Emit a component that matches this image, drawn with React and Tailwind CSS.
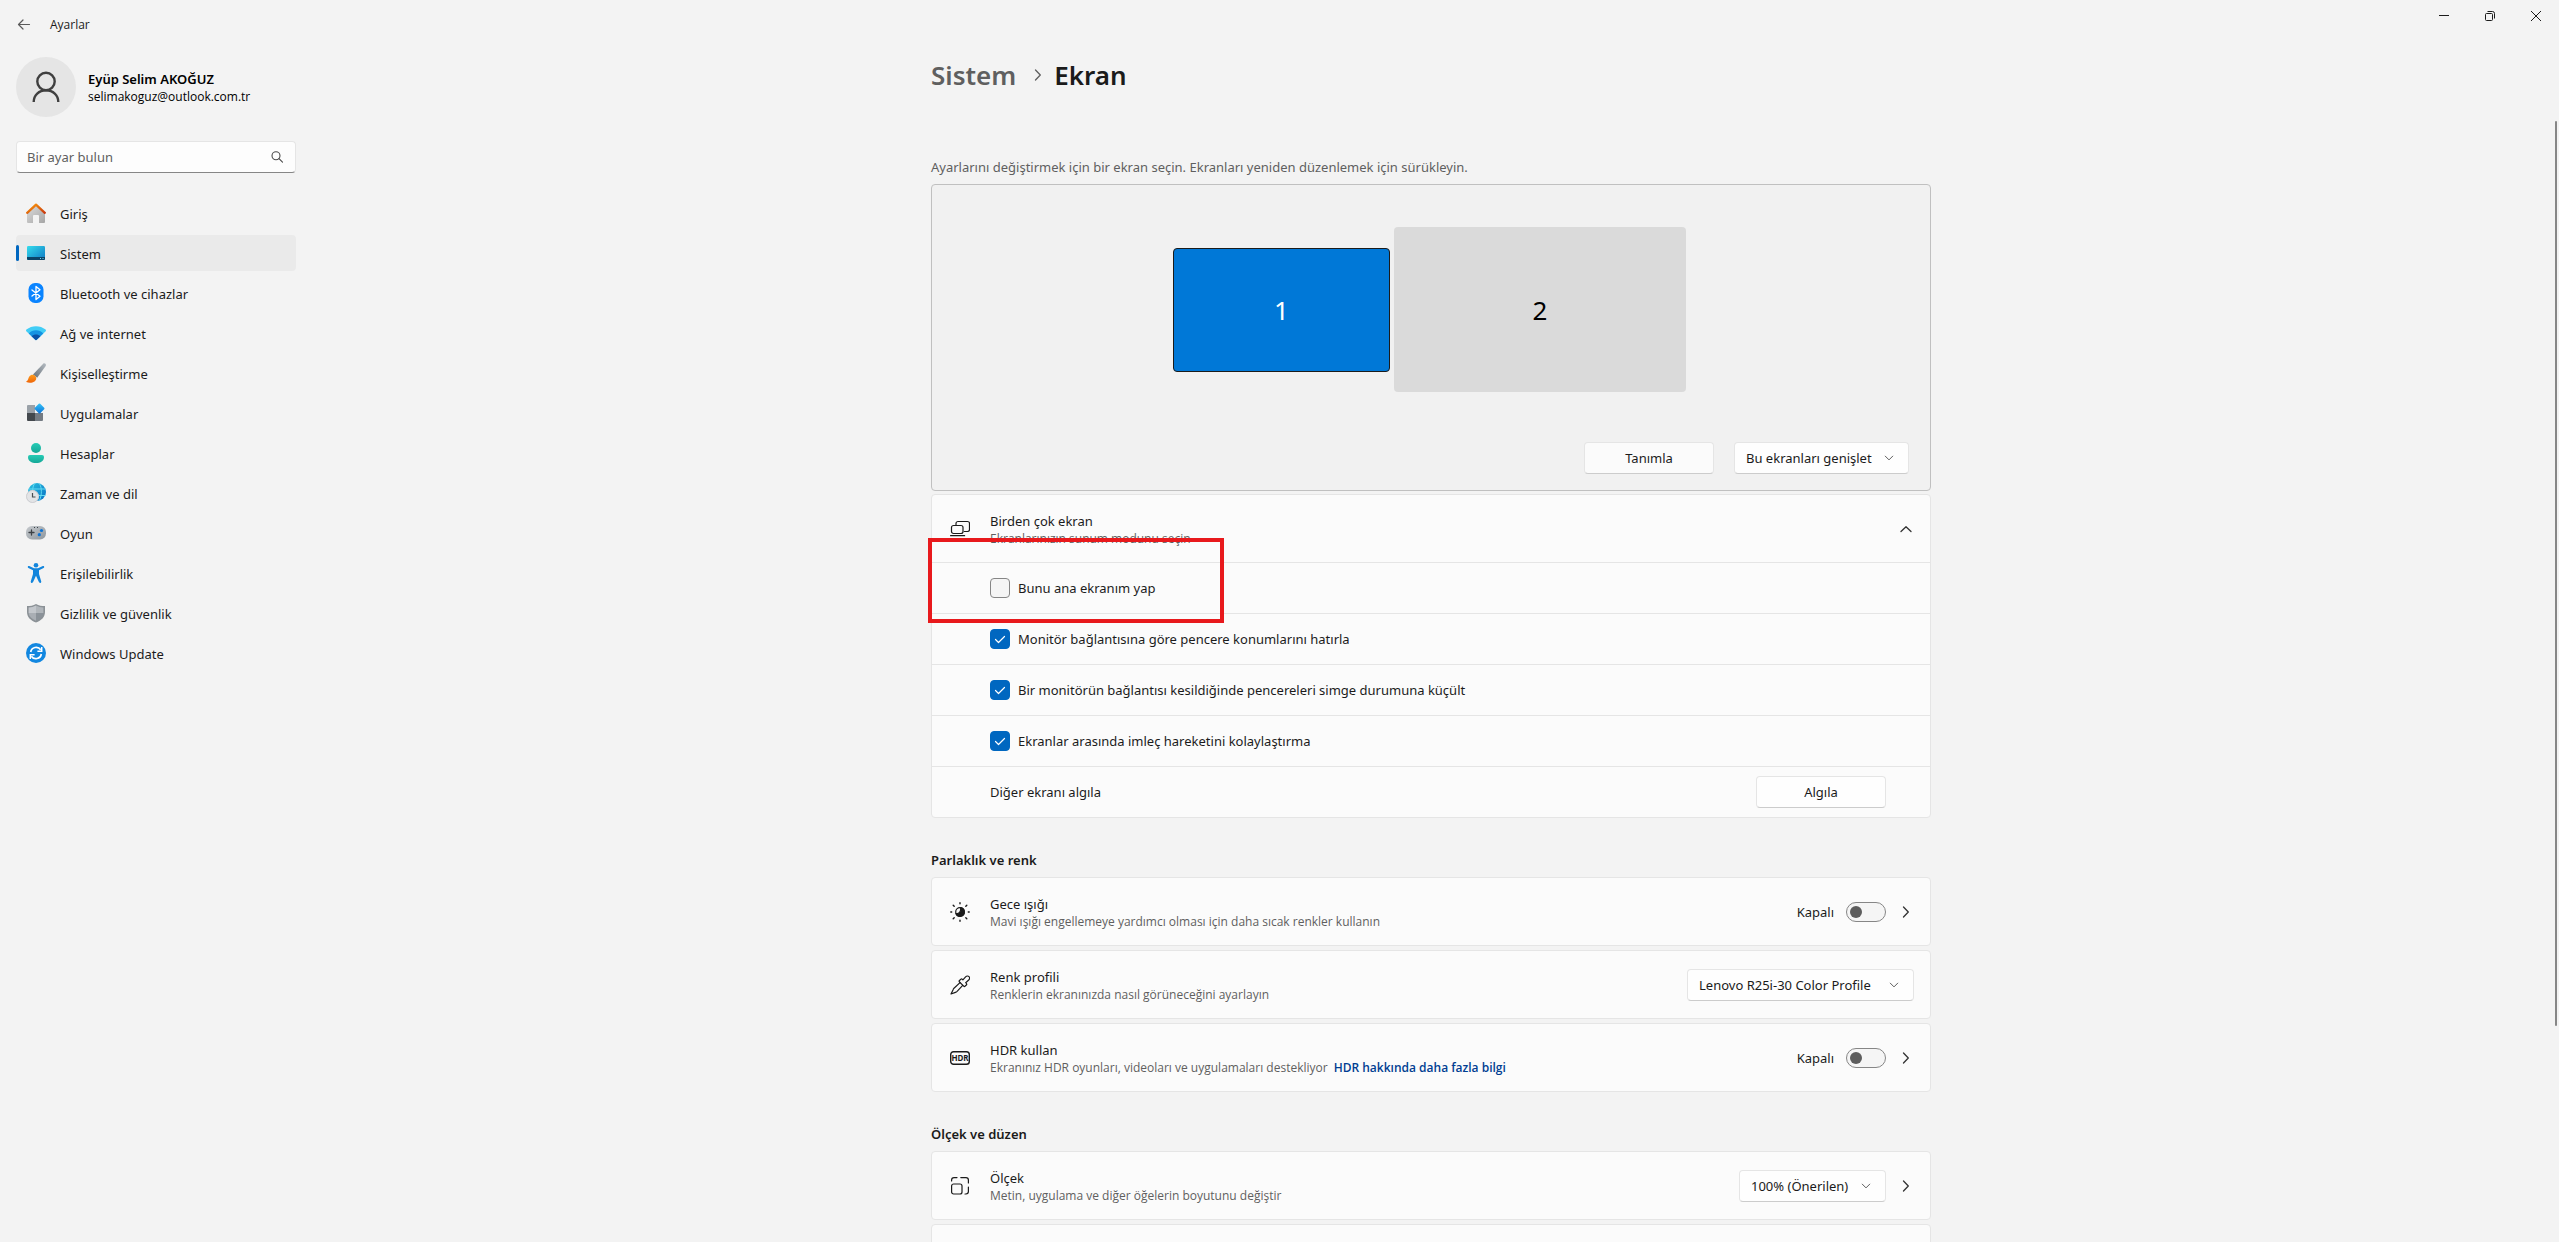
import { useState } from 'react'
import clsx from 'clsx'

/* ---------- Sidebar icons ---------- */

function HomeIcon() {
  return (
    <svg viewBox="0 0 20 20" className="size-5" aria-hidden="true">
      <defs>
        <linearGradient id="homeBody" x1="0" y1="0" x2="1" y2="1">
          <stop offset="0" stopColor="#dcdcdc" />
          <stop offset="1" stopColor="#a6a6a6" />
        </linearGradient>
        <linearGradient id="homeRoof" x1="0" y1="0" x2="1" y2="1">
          <stop offset="0" stopColor="#fb9a0a" />
          <stop offset="1" stopColor="#c93a10" />
        </linearGradient>
      </defs>
      <path d="M1 9.5 10 1.5l9 8V19a1 1 0 0 1-1 1h-5v-7a1 1 0 0 0-1-1H8a1 1 0 0 0-1 1v7H2a1 1 0 0 1-1-1z" fill="url(#homeBody)" />
      <path d="M1.2 9.8 10 1.7l8.8 8.1" fill="none" stroke="url(#homeRoof)" strokeWidth="2.3" strokeLinecap="round" strokeLinejoin="round" />
    </svg>
  )
}

function SystemIcon() {
  return (
    <svg viewBox="0 0 20 20" className="size-5" aria-hidden="true">
      <defs>
        <linearGradient id="sysScreen" x1="0" y1="0" x2="1" y2="1">
          <stop offset="0" stopColor="#35dcec" />
          <stop offset="1" stopColor="#0f78c4" />
        </linearGradient>
      </defs>
      <rect x="1" y="3" width="18" height="14" rx="1.2" fill="url(#sysScreen)" />
      <path d="M1 14h18v1.8a1.2 1.2 0 0 1-1.2 1.2H2.2A1.2 1.2 0 0 1 1 15.8z" fill="#0b4468" />
      <path d="M14 15h1v1h-1zM16.5 15h1v1h-1z" fill="#6fd6f2" />
    </svg>
  )
}

function BluetoothIcon() {
  return (
    <svg viewBox="0 0 20 20" className="size-5" aria-hidden="true">
      <rect x="2.5" width="15" height="20" rx="6.5" fill="#0a84ff" />
      <path d="m6 7 8 6.3-4 3.2V3.5l4 3.2L6 13" fill="none" stroke="#fff" strokeWidth="1.3" strokeLinejoin="round" strokeLinecap="round" />
    </svg>
  )
}

function NetworkIcon() {
  return (
    <svg viewBox="0 0 20 20" className="size-5" aria-hidden="true">
      <path d="M.3 8.2C-.1 7.8-.1 7 .4 6.6 5.8 2 14.2 2 19.600 6.600c.5.4.5 1.200.1 1.600l-9 8.600a1 1 0 0 1-1.400 0z" fill="#41cdf6" />
      <path d="M2.700 10.500c4-4.200 10.600-4.200 14.600 0l-6.600 6.300a1 1 0 0 1-1.400 0z" fill="#1593e2" />
      <path d="M5.600 13.300c2.400-2.500 6.400-2.500 8.800 0l-3.700 3.500a1 1 0 0 1-1.400 0z" fill="#0b52a6" />
    </svg>
  )
}

function BrushIcon() {
  return (
    <svg viewBox="0 0 20 20" className="size-5" aria-hidden="true">
      <defs>
        <linearGradient id="brushHandle" x1="1" y1="0" x2="0" y2="1">
          <stop offset="0" stopColor="#b4bbc1" />
          <stop offset="1" stopColor="#667079" />
        </linearGradient>
        <linearGradient id="brushTip" x1="0" y1="0" x2="0" y2="1">
          <stop offset="0" stopColor="#ff9d1e" />
          <stop offset="1" stopColor="#ee6407" />
        </linearGradient>
      </defs>
      <path d="M7 11.500 17.200.8c1.300-1.300 3.500.4 2.500 2.100L11.200 14.800z" fill="url(#brushHandle)" />
      <path d="M3.300 13.500c1.400-2.100 4.300-2.400 6-.6 1.500 1.700 1.200 4.300-.8 5.700-2.500 1.600-6 1.500-8.100.5-.3-.2-.3-.5 0-.6 2-.8 1.700-3.400 2.900-5z" fill="url(#brushTip)" />
    </svg>
  )
}

function AppsIcon() {
  return (
    <svg viewBox="0 0 20 20" className="size-5" aria-hidden="true">
      <defs>
        <linearGradient id="appsGem" x1="0" y1="0" x2="1" y2="1">
          <stop offset="0" stopColor="#36c5f8" />
          <stop offset="1" stopColor="#0a70d8" />
        </linearGradient>
      </defs>
      <path d="M2 2h7v8H1V3a1 1 0 0 1 1-1z" fill="#9aa1a8" />
      <path d="M1 10h8v8H2a1 1 0 0 1-1-1z" fill="#43484d" />
      <path d="M9 10h8v7a1 1 0 0 1-1 1H9z" fill="#747b83" />
      <rect x="9.700" y="1.700" width="7.600" height="7.600" rx="1" transform="rotate(45 13.500 5.500)" fill="url(#appsGem)" />
    </svg>
  )
}

function AccountsIcon() {
  return (
    <svg viewBox="0 0 20 20" className="size-5" aria-hidden="true">
      <defs>
        <linearGradient id="accFill" x1="0" y1="0" x2="0" y2="1">
          <stop offset="0" stopColor="#25cbb5" />
          <stop offset="1" stopColor="#15a797" />
        </linearGradient>
      </defs>
      <circle cx="10" cy="5" r="5" fill="url(#accFill)" />
      <path d="M4 12h12a2 2 0 0 1 2 2c0 4-3.500 6-8 6s-8-2-8-6a2 2 0 0 1 2-2z" fill="url(#accFill)" />
    </svg>
  )
}

function TimeIcon() {
  return (
    <svg viewBox="0 0 20 20" className="size-5" aria-hidden="true">
      <defs>
        <linearGradient id="timeGlobe" x1="0" y1="0" x2="1" y2="1">
          <stop offset="0" stopColor="#2bc3e0" />
          <stop offset="1" stopColor="#0870c4" />
        </linearGradient>
      </defs>
      <circle cx="11" cy="9" r="9" fill="url(#timeGlobe)" />
      <path d="M3 6h16.500M10 12.500h9.500M8.500.5C6.500 4 6.500 7 7 9M13.500.5c2.500 5 2.500 11 0 17" fill="none" stroke="#63dcf2" strokeWidth="1" />
      <circle cx="6.500" cy="13.500" r="6.500" fill="#e3e4e6" />
      <circle cx="6.500" cy="13.500" r="6" fill="none" stroke="#c6c8cb" strokeWidth=".8" />
      <path d="M6.500 10v4h3" fill="none" stroke="#4a4d50" strokeWidth="1.200" />
    </svg>
  )
}

function GamingIcon() {
  return (
    <svg viewBox="0 0 20 20" className="size-5" aria-hidden="true">
      <defs>
        <linearGradient id="padBody" x1="0" y1="0" x2="1" y2="1">
          <stop offset="0" stopColor="#c6cace" />
          <stop offset="1" stopColor="#8e969d" />
        </linearGradient>
      </defs>
      <rect y="3" width="20" height="13.500" rx="6" fill="url(#padBody)" />
      <path d="M5.500 7v5M3 9.500h5" stroke="#3c4146" strokeWidth="1.300" strokeLinecap="round" />
      <path d="M8 4h1v1H8zM11 4h1v1h-1z" fill="#3c4146" />
      <circle cx="15.500" cy="7.500" r="1.600" fill="#0c73d6" />
      <circle cx="13.300" cy="11.700" r="1.600" fill="#0c73d6" />
    </svg>
  )
}

function AccessibilityIcon() {
  return (
    <svg viewBox="0 0 20 20" className="size-5" aria-hidden="true">
      <circle cx="10" cy="2.300" r="2.300" fill="#1285dc" />
      <path d="M3.200 3.100 8 5.200h4l4.800-2.100c1.400-.5 2 1.400.8 2L13 7.300V11l2.200 7.300c.4 1.500-1.700 2.300-2.300.8L10 12.800l-2.900 6.300c-.6 1.500-2.700.7-2.300-.8L7 11V7.300L2.400 5.100c-1.200-.6-.6-2.500.8-2z" fill="#1285dc" />
    </svg>
  )
}

function PrivacyIcon() {
  return (
    <svg viewBox="0 0 20 20" className="size-5" aria-hidden="true">
      <path d="M10 1c2.800 1.700 5.700 2.100 9 2.100V9c0 5-3.500 8.500-9 10.500C4.500 17.500 1 14 1 9V3.100C4.300 3.100 7.200 2.700 10 1z" fill="#8b9196" />
      <path d="M10 2.600V10H2.600V4.500c2.700-.1 5.100-.6 7.400-1.900z" fill="#c3c7cc" />
      <path d="M10 2.600V10h7.400V4.500c-2.700-.1-5.100-.6-7.400-1.900z" fill="#b0b5ba" />
      <path d="M10 10v7.700C5.800 16 3 13.500 2.600 10z" fill="#a9aeb4" />
      <path d="M10 10v7.700c4.200-1.700 7-4.200 7.400-7.700z" fill="#8b9299" />
    </svg>
  )
}

function UpdateIcon() {
  return (
    <svg viewBox="0 0 20 20" className="size-5" aria-hidden="true">
      <circle cx="10" cy="10" r="10" fill="#1287e0" />
      <path d="M4.700 9a5.500 5.500 0 0 1 10-2.200M15.300 11a5.500 5.500 0 0 1-10 2.200" fill="none" stroke="#fff" strokeWidth="1.700" />
      <path d="M15.700 4v4.300h-4.300M4.300 16v-4.300h4.300" fill="none" stroke="#fff" strokeWidth="1.500" />
    </svg>
  )
}

/* ---------- Line icons ---------- */

function Chevron({ dir = 'right', className = 'size-4' }) {
  const d = {
    right: 'm5.500 3 4.800 5-4.800 5',
    up: 'M3 10.500 8 5.700l5 4.800',
    down: 'm3 5.500 5 5 5-5',
  }
  return (
    <svg viewBox="0 0 16 16" className={className} fill="none" stroke="currentColor" strokeWidth="1.300" strokeLinecap="round" strokeLinejoin="round" aria-hidden="true">
      <path d={d[dir]} />
    </svg>
  )
}

function LineIcon({ children }) {
  return (
    <svg viewBox="0 0 20 20" className="size-5 shrink-0 text-[#1b1b1b]" fill="none" stroke="currentColor" strokeWidth="1.200" strokeLinecap="round" strokeLinejoin="round" aria-hidden="true">
      {children}
    </svg>
  )
}

const icons = {
  displays: (
    <LineIcon>
      <path d="M6 6.200V4.500A2 2 0 0 1 8 2.500h9.500a2 2 0 0 1 2 2v6a2 2 0 0 1-2 2h-3.200" />
      <rect x="1.500" y="6.500" width="11.500" height="8" rx="2" />
      <path d="M.6 16.700h14" />
    </LineIcon>
  ),
  night: (
    <LineIcon>
      <circle cx="10" cy="10" r="4.300" />
      <path d="M10.500 5.700A4.300 4.300 0 1 1 6 11.500c3 .8 5.500-2.600 4.500-5.800z" fill="currentColor" />
      <path d="M10 .8v.9M10 18.300v.9M.8 10h.9M18.300 10h.9M3.200 3.200l1 1M15.800 15.800l1 1M16.800 3.200l-1 1M4.200 15.800l-1 1" strokeWidth="1.400" />
    </LineIcon>
  ),
  dropper: (
    <LineIcon>
      <path d="m9.500 5.500 1.200-1.200c.5-.5 1.200-.5 1.700 0l.5.500 2.700-3c1-1 2.600-1.100 3.400-.2.900.9.700 2.400-.3 3.400l-3 2.700.600.600c.5.500.5 1.200 0 1.700l-1.300 1.200c-.4.400-.9.400-1.300 0L9.500 7c-.4-.4-.4-1.100 0-1.500z" />
      <path d="m10 7.600-6 5.600c-.5.500-.8 1-1 1.700L1 19l4.400-1.600c.6-.2 1.200-.6 1.700-1.100l5.600-5.900" />
    </LineIcon>
  ),
  hdr: (
    <LineIcon>
      <rect x=".7" y="3.700" width="18.600" height="12.600" rx="2.800" strokeWidth="1.400" />
      <text x="10" y="12.900" textAnchor="middle" fontSize="8" fontWeight="700" fill="currentColor" stroke="none">HDR</text>
    </LineIcon>
  ),
  scale: (
    <LineIcon>
      <rect x="1.600" y="8" width="10.400" height="10" rx="2" />
      <path d="M1.600 5V4a2.400 2.400 0 0 1 2.400-2.400h3M10.800 1.600H16A2.400 2.400 0 0 1 18.400 4v3M18.400 11v4.600a2.400 2.400 0 0 1-2.400 2.400h-1" />
    </LineIcon>
  ),
}

/* ---------- Controls ---------- */

const controlBox = 'h-8 rounded-[4px] border border-[#e5e5e5] border-b-[#cccccc] text-[13px] text-[#1b1b1b]'
const smallText = "font-['Open_Sans',sans-serif] text-[12px] leading-4"

function Dropdown({ label, value, className }) {
  return (
    <div className={clsx('grid items-center', className)}>
      <select aria-label={label} className={clsx(controlBox, 'col-start-1 row-start-1 w-full appearance-none bg-[#fefefe] pl-[11px] pr-7 outline-none')}>
        <option>{value}</option>
      </select>
      <span className="pointer-events-none col-start-1 row-start-1 mr-[14px] justify-self-end text-[#5a5a5a]">
        <Chevron dir="down" className="size-3" />
      </span>
    </div>
  )
}

function CheckRow({ label, initial }) {
  const [checked, setChecked] = useState(initial)
  return (
    <label className="flex h-[51px] items-center gap-2 border-t border-[#e5e5e5] pl-[58px]">
      <span className="grid size-5 place-items-center">
        <input
          type="checkbox"
          checked={checked}
          onChange={e => setChecked(e.target.checked)}
          className="col-start-1 row-start-1 size-5 appearance-none rounded-[4px] border border-[#868686] bg-[#f5f5f5] checked:border-[#0067c0] checked:bg-[#0067c0]"
        />
        {checked && (
          <svg viewBox="0 0 12 12" className="pointer-events-none col-start-1 row-start-1 size-3" fill="none" stroke="#fff" strokeWidth="1.200" strokeLinecap="round" strokeLinejoin="round" aria-hidden="true">
            <path d="m1.500 6.500 3 3 6-6" />
          </svg>
        )}
      </span>
      {label}
    </label>
  )
}

function Toggle({ label }) {
  const [on, setOn] = useState(false)
  return (
    <label className="flex items-center gap-3">
      {on ? 'Açık' : 'Kapalı'}
      <input
        type="checkbox"
        role="switch"
        aria-label={label}
        checked={on}
        onChange={e => setOn(e.target.checked)}
        className="flex h-5 w-10 appearance-none items-center rounded-full border border-[#868686] bg-[#f5f5f5] px-[3px] before:size-3 before:rounded-full before:bg-[#5d5d5d] before:content-[''] checked:justify-end checked:border-[#0067c0] checked:bg-[#0067c0] checked:before:bg-white"
      />
    </label>
  )
}

function OpenButton({ label }) {
  return (
    <button type="button" aria-label={label} className="flex w-7 justify-end text-[#333333]">
      <Chevron />
    </button>
  )
}

function SettingText({ title, sub, link }) {
  return (
    <div className="min-w-0 flex-1">
      <p className="leading-5">{title}</p>
      <p className={clsx(smallText, 'text-[#5f5f5f]')}>
        {sub}
        {link && <a href="#hdr" className="ml-[6px] font-semibold text-[#003e92]">{link}</a>}
      </p>
    </div>
  )
}

function SettingCard({ icon, title, sub, link, children }) {
  return (
    <div className="flex min-h-[69px] items-center rounded-[4px] border border-[#e5e5e5] bg-[#fbfbfb] pl-[18px] pr-4">
      {icon}
      <div className="flex flex-1 items-center pl-5">
        <SettingText title={title} sub={sub} link={link} />
        {children}
      </div>
    </div>
  )
}

/* ---------- Page ---------- */

const NAV = [
  { label: 'Giriş', Icon: HomeIcon },
  { label: 'Sistem', Icon: SystemIcon, active: true },
  { label: 'Bluetooth ve cihazlar', Icon: BluetoothIcon },
  { label: 'Ağ ve internet', Icon: NetworkIcon },
  { label: 'Kişiselleştirme', Icon: BrushIcon },
  { label: 'Uygulamalar', Icon: AppsIcon },
  { label: 'Hesaplar', Icon: AccountsIcon },
  { label: 'Zaman ve dil', Icon: TimeIcon },
  { label: 'Oyun', Icon: GamingIcon },
  { label: 'Erişilebilirlik', Icon: AccessibilityIcon },
  { label: 'Gizlilik ve güvenlik', Icon: PrivacyIcon },
  { label: 'Windows Update', Icon: UpdateIcon },
]

function TitleBar() {
  return (
    <header className="flex h-[50px] shrink-0 items-center">
      <button type="button" aria-label="Geri" className="ml-4 flex size-4 items-center justify-center text-[#5a5a5a]">
        <svg viewBox="0 0 16 16" className="size-4" fill="none" stroke="currentColor" strokeWidth="1.200" strokeLinecap="round" strokeLinejoin="round" aria-hidden="true">
          <path d="M13.500 7.500H2.500M7 3 2.500 7.500 7 12" />
        </svg>
      </button>
      <span className={clsx(smallText, 'ml-[18px]')}>Ayarlar</span>
      <div className="ml-auto flex self-start">
        <button type="button" aria-label="Simge durumuna küçült" className="flex h-8 w-[46px] items-center justify-center">
          <svg viewBox="0 0 10 10" className="size-[10px]" fill="none" stroke="currentColor" aria-hidden="true"><path d="M0 4.500h10" /></svg>
        </button>
        <button type="button" aria-label="Önceki boyut" className="flex h-8 w-[46px] items-center justify-center">
          <svg viewBox="0 0 10 10" className="size-[10px]" fill="none" stroke="currentColor" aria-hidden="true">
            <rect x=".5" y="2.500" width="7" height="7" rx="1" />
            <path d="M2.500.5h5a2 2 0 0 1 2 2v5" />
          </svg>
        </button>
        <button type="button" aria-label="Kapat" className="flex h-8 w-[46px] items-center justify-center">
          <svg viewBox="0 0 10 10" className="size-[10px]" fill="none" stroke="currentColor" aria-hidden="true"><path d="m0 0 10 10M10 0 0 10" /></svg>
        </button>
      </div>
    </header>
  )
}

function Sidebar() {
  return (
    <aside className="w-[303px] shrink-0 pl-4 pr-[7px] pt-[7px]">
      <div className="flex items-center gap-3">
        <div className="flex size-[60px] items-center justify-center rounded-full bg-[#e5e5e5]">
          <svg viewBox="0 0 60 60" className="size-[60px]" fill="none" stroke="#3f3f3f" strokeWidth="2.400" aria-hidden="true">
            <circle cx="30" cy="24.500" r="8.700" />
            <path d="M17.700 45c0-7 5.300-11.700 12.300-11.700S42.300 38 42.300 45" />
          </svg>
        </div>
        <div className="text-black">
          <p className="text-[13px] font-semibold leading-5">Eyüp Selim AKOĞUZ</p>
          <p className={smallText}>selimakoguz@outlook.com.tr</p>
        </div>
      </div>

      <div className="mt-6 flex h-8 items-center rounded-[4px] border border-[#e5e5e5] border-b-[#868686] bg-[#fdfdfd] pl-[10px] pr-3">
        <input type="text" aria-label="Bir ayar bulun" placeholder="Bir ayar bulun" className="min-w-0 flex-1 bg-transparent outline-none placeholder:text-[#5f5f5f]" />
        <svg viewBox="0 0 12 12" className="size-3" fill="none" stroke="#4a4a4a" strokeWidth="1.100" strokeLinecap="round" aria-hidden="true">
          <circle cx="5" cy="4.700" r="4" />
          <path d="m8 7.700 3.500 3.500" />
        </svg>
      </div>

      <nav className="mt-[22px] flex flex-col gap-1">
        {NAV.map(({ label, Icon, active }) => (
          <a key={label} href="#nav" className={clsx('flex h-9 items-center rounded-[4px]', active && 'bg-[#eaeaea]')}>
            <span className={clsx('h-4 w-[3px] rounded-full', active && 'bg-[#0067c0]')} />
            <span className="ml-[7px]"><Icon /></span>
            <span className="ml-[14px] pt-[2px]">{label}</span>
          </a>
        ))}
      </nav>
    </aside>
  )
}

export default function App() {
  return (
    <div className="relative flex h-screen flex-col overflow-hidden bg-[#f3f3f3] font-['Noto_Sans',sans-serif] text-[13px] leading-5 text-[#1b1b1b]">
      <TitleBar />
      <div className="flex min-h-0 flex-1">
        <Sidebar />

        <main className="min-w-0 flex-1 overflow-hidden">
          <div className="mx-auto max-w-[1000px]">
            <h1 className="flex items-center pt-[7px] text-[26px] font-semibold leading-9">
              <a href="#sistem" className="text-[#5f5f5f]">Sistem</a>
              <span className="ml-[14px] mr-2 text-[#5f5f5f]"><Chevron /></span>
              Ekran
            </h1>

            <p className="mt-16 text-[#5f5f5f]">
              Ayarlarını değiştirmek için bir ekran seçin. Ekranları yeniden düzenlemek için sürükleyin.
            </p>

            {/* Display arrangement */}
            <section className="mt-[7px] rounded-[4px] border border-[#c0c0c0] bg-[#f1f1f1] pb-4 pt-[42px]">
              <div className="flex items-center justify-center gap-1 pr-[3px] text-[26px]">
                <button type="button" className="h-[124px] w-[217px] rounded-[4px] border border-[#1b1b1b] bg-[#0078d7] text-white">1</button>
                <button type="button" className="h-[165px] w-[292px] rounded-[4px] bg-[#dadada] text-black">2</button>
              </div>
              <div className="mt-[50px] flex justify-end gap-5 pr-[21px]">
                <button type="button" className={clsx(controlBox, 'w-[130px] bg-[#fbfbfb]')}>Tanımla</button>
                <Dropdown label="Çoklu ekran modu" value="Bu ekranları genişlet" className="w-[175px]" />
              </div>
            </section>

            {/* Multiple displays */}
            <section className="relative mt-[3px] rounded-[4px] border border-[#e5e5e5] bg-[#fbfbfb]">
              <div className="flex h-[67px] items-center pl-[18px] pr-4">
                {icons.displays}
                <div className="flex flex-1 items-center pl-5">
                  <SettingText title="Birden çok ekran" sub="Ekranlarınızın sunum modunu seçin" />
                  <button type="button" aria-label="Daralt" className="text-[#333333]"><Chevron dir="up" /></button>
                </div>
              </div>
              <CheckRow label="Bunu ana ekranım yap" initial={false} />
              <CheckRow label="Monitör bağlantısına göre pencere konumlarını hatırla" initial />
              <CheckRow label="Bir monitörün bağlantısı kesildiğinde pencereleri simge durumuna küçült" initial />
              <CheckRow label="Ekranlar arasında imleç hareketini kolaylaştırma" initial />
              <div className="flex h-[51px] items-center justify-between border-t border-[#e5e5e5] pl-[58px] pr-11">
                <span>Diğer ekranı algıla</span>
                <button type="button" className={clsx(controlBox, 'w-[130px] bg-[#fefefe]')}>Algıla</button>
              </div>
              <div className="pointer-events-none absolute -left-1 top-[43px] h-[85px] w-[296px] border-4 border-[#e8191c]" />
            </section>

            <h2 className="mb-[7px] mt-8 font-semibold">Parlaklık ve renk</h2>
            <div className="flex flex-col gap-1">
              <SettingCard icon={icons.night} title="Gece ışığı" sub="Mavi ışığı engellemeye yardımcı olması için daha sıcak renkler kullanın">
                <Toggle label="Gece ışığı" />
                <OpenButton label="Gece ışığı ayarları" />
              </SettingCard>
              <SettingCard icon={icons.dropper} title="Renk profili" sub="Renklerin ekranınızda nasıl görüneceğini ayarlayın">
                <Dropdown label="Renk profili" value="Lenovo R25i-30 Color Profile" className="w-[227px]" />
              </SettingCard>
              <SettingCard icon={icons.hdr} title="HDR kullan" sub="Ekranınız HDR oyunları, videoları ve uygulamaları destekliyor" link="HDR hakkında daha fazla bilgi">
                <Toggle label="HDR kullan" />
                <OpenButton label="HDR ayarları" />
              </SettingCard>
            </div>

            <h2 className="mb-[7px] mt-8 font-semibold">Ölçek ve düzen</h2>
            <div className="flex flex-col gap-1">
              <SettingCard icon={icons.scale} title="Ölçek" sub="Metin, uygulama ve diğer öğelerin boyutunu değiştir">
                <Dropdown label="Ölçek" value="100% (Önerilen)" className="w-[147px]" />
                <OpenButton label="Ölçek ayarları" />
              </SettingCard>
              <div className="h-[69px] rounded-[4px] border border-[#e5e5e5] bg-[#fbfbfb]" />
            </div>
          </div>
        </main>
      </div>

      {/* Scroll thumb */}
      <div className="absolute right-[2px] top-[121px] h-[905px] w-[2px] rounded-full bg-[#868686]" />
    </div>
  )
}
